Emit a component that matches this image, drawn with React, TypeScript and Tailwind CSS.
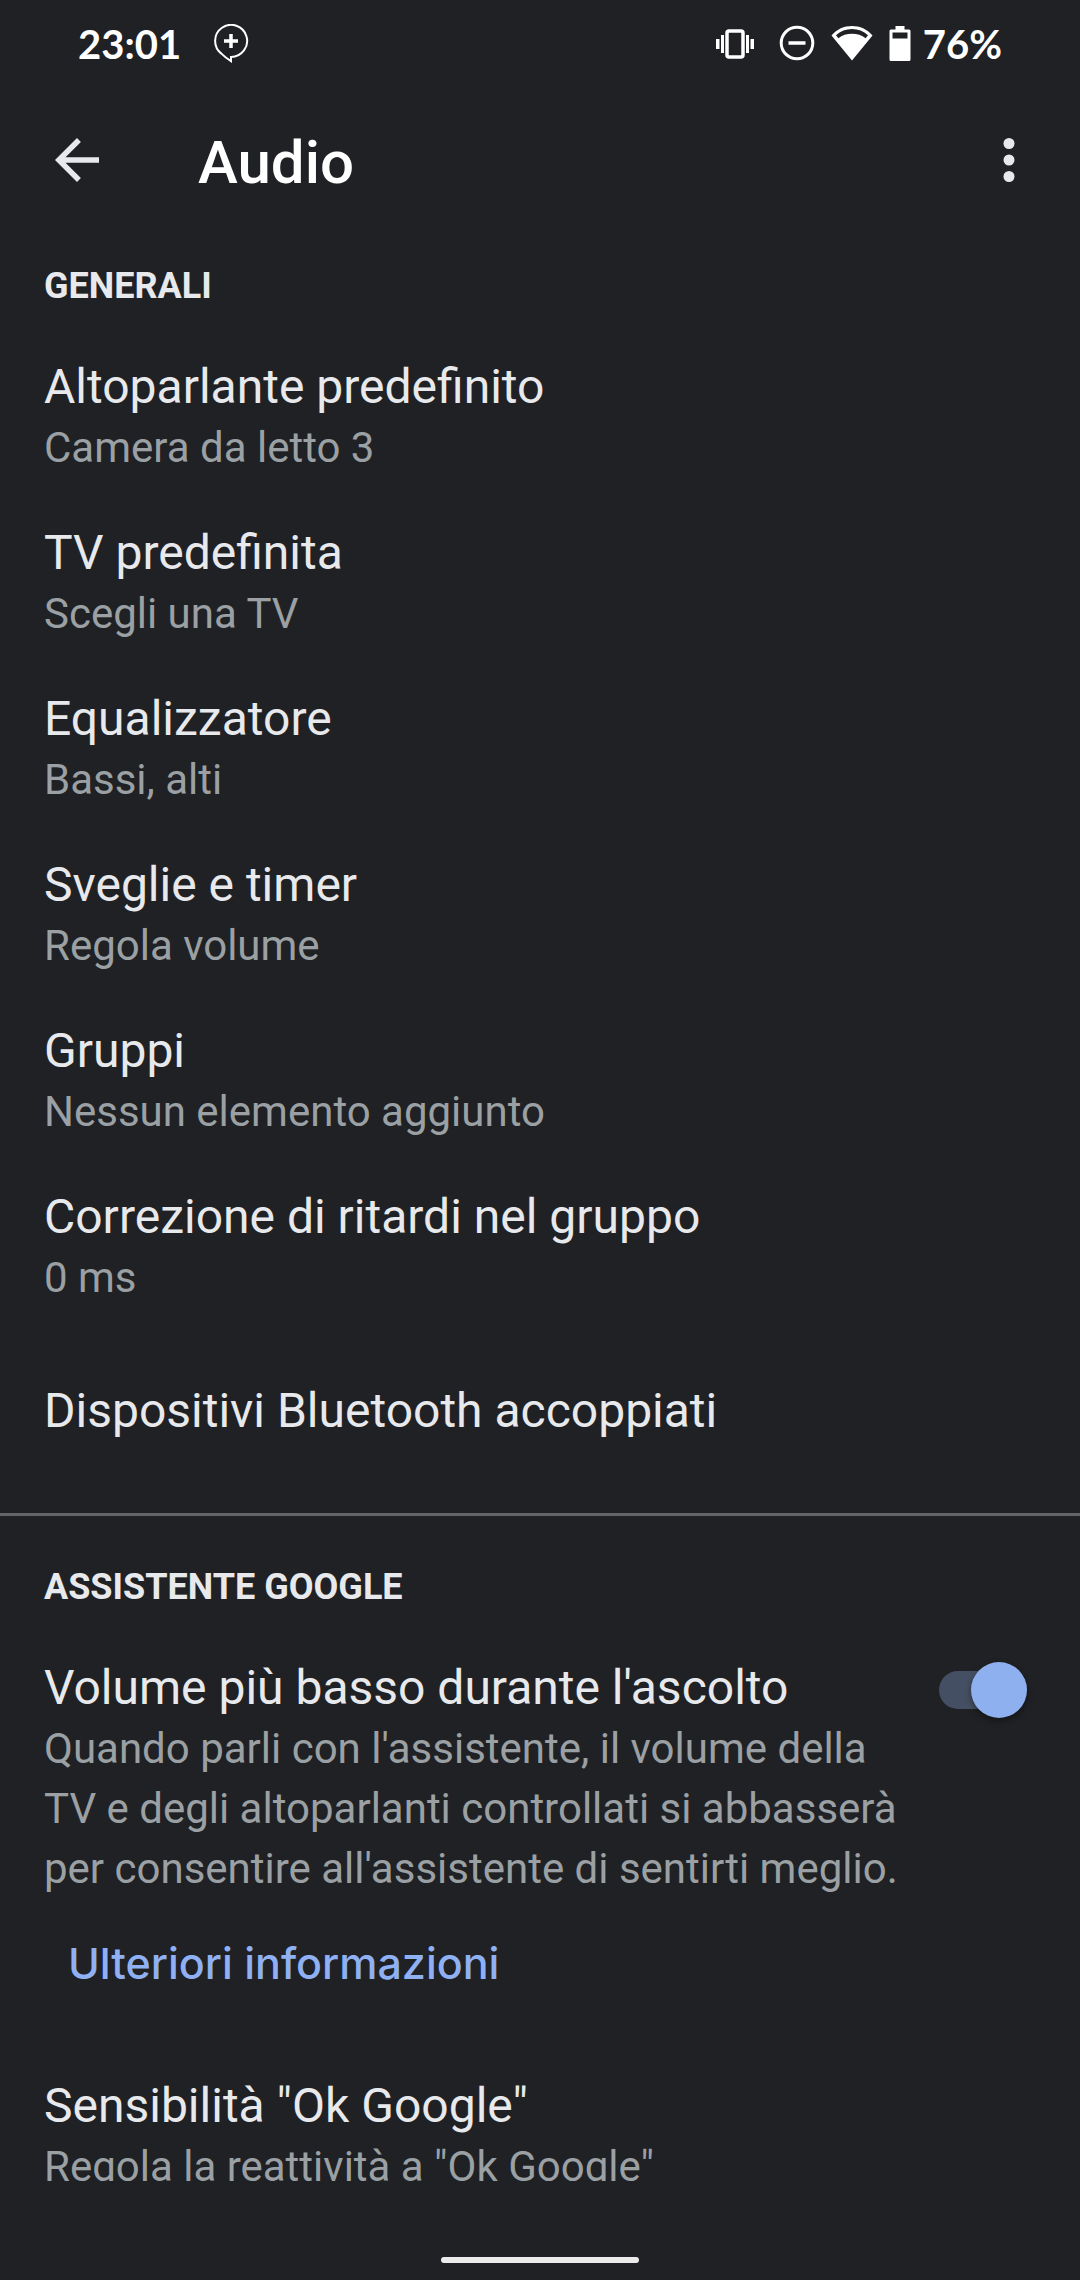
import { useState } from 'react';

const generalSettings = [
  { title: 'Altoparlante predefinito', subtitle: 'Camera da letto 3' },
  { title: 'TV predefinita', subtitle: 'Scegli una TV' },
  { title: 'Equalizzatore', subtitle: 'Bassi, alti' },
  { title: 'Sveglie e timer', subtitle: 'Regola volume' },
  { title: 'Gruppi', subtitle: 'Nessun elemento aggiunto' },
  { title: 'Correzione di ritardi nel gruppo', subtitle: '0 ms' },
];

const StatusBar = () => (
  <div className="flex h-21 shrink-0 items-center justify-between px-[78px] pt-1 text-white">
    <div className="flex items-center gap-8">
      <span className="font-['Lato',sans-serif] text-[40px] leading-[60px] font-bold">23:01</span>
      <svg className="h-10 w-9" viewBox="0 0 36 40" fill="none" stroke="currentColor" strokeWidth="2">
        <path d="M18 37.2V32.9a16 16 0 1 0-9.600-3.300c2.700 2.700 6 5.200 9.600 7.600z" />
        <path d="M18 10v14M11 17h14" strokeWidth="3.5" />
      </svg>
    </div>
    <div className="flex items-center">
      <svg className="mr-6 h-10 w-10" viewBox="0 0 40 40" fill="currentColor">
        <rect x="12" y="7" width="16" height="26" rx="2" fill="none" stroke="currentColor" strokeWidth="3.5" />
        <path d="M1 15h3.5v10H1zM6 11h3v18H6zM31 11h3v18h-3zM35.5 15H39v10h-3.5z" />
      </svg>
      <svg className="mr-4 h-10 w-9" viewBox="0 0 36 40" fill="none" stroke="currentColor">
        <circle cx="18" cy="19" r="15.8" strokeWidth="3" />
        <path d="M9.5 19h17" strokeWidth="3.5" />
      </svg>
      <svg className="mr-4 h-10 w-[42px]" viewBox="0 0 42 40" fill="currentColor">
        <path
          fillRule="evenodd"
          d="M21 36.5 0.5 11.5C6 5 13 2 21 2s15 3 20.5 9.5zM5 11.3l2.4 3C11 11 16 9.8 21 9.8s10 1.2 13.6 4.5l2.4-3C32.5 7 27 5 21 5S9.5 7 5 11.3z"
        />
      </svg>
      <svg className="mr-3 h-10 w-[22px]" viewBox="0 0 22 40" fill="currentColor">
        <path
          fillRule="evenodd"
          d="M6.5 2h9v3.5H20A1.5 1.5 0 0 1 21.5 7v28.500A1.5 1.5 0 0 1 20 37H2A1.5 1.5 0 0 1 .5 35.500V7A1.5 1.5 0 0 1 2 5.500h4.500zM3.500 8.500v6h15v-6z"
        />
      </svg>
      <span className="font-['Lato',sans-serif] text-[40px] leading-[60px] font-bold">76%</span>
    </div>
  </div>
);

const SectionTitle = ({ children }: { children: string }) => (
  <h2 className="px-11 pb-6 text-[36px] leading-[48px] font-bold">{children}</h2>
);

const SettingRow = ({ title, subtitle }: { title: string; subtitle: string }) => (
  <button type="button" className="block w-full px-11 py-[22px] text-left">
    <span className="block text-[48px] leading-[62px]">{title}</span>
    <span className="block text-[42px] leading-[60px] text-[#9aa0a3]">{subtitle}</span>
  </button>
);

const App = () => {
  const [lowerVolume, setLowerVolume] = useState(true);

  return (
    <div className="flex h-screen flex-col bg-[#202124] font-['Roboto',sans-serif] text-[#e8e9ec]">
      <StatusBar />

      <header className="flex h-[152px] shrink-0 items-center pl-11 pr-[38px]">
        <button type="button" aria-label="Indietro">
          <svg className="size-[66px]" viewBox="0 0 24 24" fill="currentColor">
            <path d="M20 11H7.83l5.59-5.59L12 4l-8 8 8 8 1.41-1.41L7.83 13H20v-2z" />
          </svg>
        </button>
        <h1 className="ml-22 flex-1 pt-1.5 text-[60px] leading-[72px] font-medium text-white">Audio</h1>
        <button type="button" aria-label="Altre opzioni">
          <svg className="size-[66px]" viewBox="0 0 24 24" fill="currentColor">
            <circle cx="12" cy="6" r="2" />
            <circle cx="12" cy="12" r="2" />
            <circle cx="12" cy="18" r="2" />
          </svg>
        </button>
      </header>

      <main className="min-h-0 flex-1 overflow-hidden">
        <section className="border-b-3 border-[#636467] pt-[26px] pb-[21px]">
          <SectionTitle>GENERALI</SectionTitle>
          {generalSettings.map((item) => (
            <SettingRow key={item.title} title={item.title} subtitle={item.subtitle} />
          ))}
          <button type="button" className="block w-full px-11 py-[50px] text-left text-[48px] leading-[62px]">
            Dispositivi Bluetooth accoppiati
          </button>
        </section>

        <section className="pt-[47px]">
          <SectionTitle>ASSISTENTE GOOGLE</SectionTitle>
          <div className="flex items-start gap-8 px-11 pt-[22px]">
            <label htmlFor="lower-volume" className="flex-1">
              <span className="block text-[48px] leading-[62px]">Volume più basso durante l'ascolto</span>
              <span className="block text-[42px] leading-[60px] text-[#9aa0a3]">
                Quando parli con l'assistente, il volume della TV e degli altoparlanti controllati si abbasserà per
                consentire all'assistente di sentirti meglio.
              </span>
            </label>
            <input
              id="lower-volume"
              type="checkbox"
              role="switch"
              checked={lowerVolume}
              onChange={(e) => setLowerVolume(e.target.checked)}
              className="relative mt-[14px] mr-5 h-[38px] w-[77px] appearance-none rounded-full bg-[#5f6368] before:absolute before:-top-[9px] before:-left-3 before:size-14 before:rounded-full before:bg-[#bdc1c6] before:shadow-[0_3px_6px_rgba(0,0,0,0.4)] checked:bg-[#454f63] checked:before:left-8 checked:before:bg-[#8fb0ee]"
            />
          </div>
          <a
            href="#info"
            className="mt-[34px] mb-15 ml-17 inline-block font-['Inter',sans-serif] text-[43px] leading-[60px] font-medium text-[#8fb0f3]"
          >
            Ulteriori informazioni
          </a>
          <SettingRow title={'Sensibilità "Ok Google"'} subtitle={'Regola la reattività a "Ok Google"'} />
        </section>
      </main>

      <footer className="flex h-[99px] shrink-0 items-end justify-center pb-[17px]">
        <div className="h-[6px] w-[198px] rounded-full bg-[#ececec]" />
      </footer>
    </div>
  );
};

export default App;
